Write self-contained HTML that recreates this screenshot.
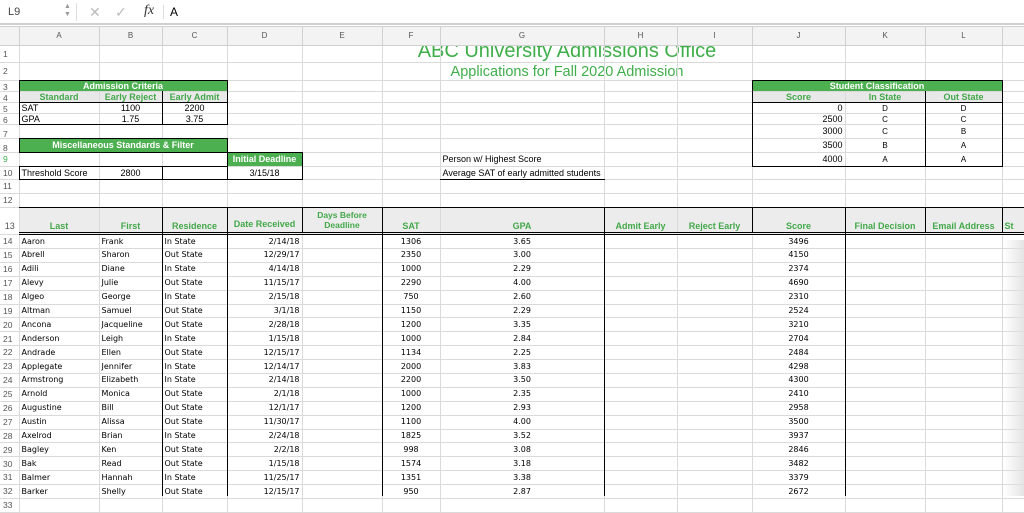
<!DOCTYPE html>
<html><head><meta charset="utf-8"><style>
*{margin:0;padding:0;box-sizing:border-box}
body{width:1024px;height:496px;overflow:hidden;background:#fff;position:relative;font-family:"Liberation Sans",Arial,sans-serif;color:#000}
#tb{position:absolute;left:0;top:0;width:1024px;height:25px;background:#fff;border-bottom:2px solid #cfcfcf}
table{position:absolute;left:0;top:26px;border-collapse:collapse;table-layout:fixed;width:1032px}
td{border:1px solid #dadada;font-size:9px;line-height:1;padding:0 2px;white-space:nowrap;overflow:hidden;vertical-align:bottom}
tr.h td{background:#f3f3f3;color:#555;text-align:center;vertical-align:middle;font-size:8px;border-color:#d0d0d0}
td.n{color:#555;font-size:8.5px;text-align:left;padding-left:3px;border-left:none;background:#fff}
tr.h td.n{background:#f3f3f3}
.g{background:#4caf50;color:#fff;font-weight:bold;text-align:center;font-size:9px}
.s{background:#e8e8e8;color:#43a84a;font-weight:bold;text-align:center;font-size:9px}
.hd td{background:#ececec;color:#43a84a;font-weight:bold;font-size:9px;text-align:center;padding-bottom:3px}
.hd td.n{background:#fff;color:#555;font-weight:normal}
.d td{font-family:"DejaVu Sans",sans-serif;font-size:8px;vertical-align:middle}
.d td.n{font-family:"Liberation Sans",sans-serif;font-size:8.5px}
.r{text-align:right}.c{text-align:center}
.b{position:absolute;border:1px solid #000;pointer-events:none}
.v{position:absolute;width:1px;background:#000}
.hl{position:absolute;height:1px;background:#000}
</style></head><body>
<div id="tb">
<div style="position:absolute;left:8px;top:6px;font-size:11px;color:#444">L9</div>
<div style="position:absolute;left:64px;top:3px;font-size:7px;color:#999;line-height:8px">▲<br>▼</div>
<div style="position:absolute;left:76px;top:3px;width:1px;height:18px;background:#ddd"></div>
<div style="position:absolute;left:89px;top:4px;font-size:14px;color:#bbb">✕</div>
<div style="position:absolute;left:115px;top:4px;font-size:14px;color:#bbb">✓</div>
<div style="position:absolute;left:144px;top:3px;font-size:14px;font-style:italic;font-family:'Liberation Serif',serif;color:#333">fx</div>
<div style="position:absolute;left:163px;top:5px;width:1px;height:14px;background:#ddd"></div>
<div style="position:absolute;left:170px;top:5px;font-size:12px">A</div>
</div>
<div style="position:absolute;left:340px;top:46px;width:454px;height:15px;overflow:hidden"><div style="position:absolute;left:0;top:-7px;width:454px;text-align:center;font-size:20px;line-height:24px;color:#3fae4a">ABC University Admissions Office</div></div>
<div style="position:absolute;left:340px;top:64px;width:454px;text-align:center;font-size:14.5px;line-height:17px;color:#3fae4a">Applications for Fall 2020 Admission</div>
<table>
<colgroup><col style="width:19px"><col style="width:80px"><col style="width:63px"><col style="width:65px"><col style="width:75px"><col style="width:80px"><col style="width:58px"><col style="width:164px"><col style="width:73px"><col style="width:75px"><col style="width:93px"><col style="width:80px"><col style="width:77px"><col style="width:30px"></colgroup>
<tr class="h" style="height:19px"><td class="n"></td><td>A</td><td>B</td><td>C</td><td>D</td><td>E</td><td>F</td><td>G</td><td>H</td><td>I</td><td>J</td><td>K</td><td>L</td><td></td></tr>
<tr style="height:17px"><td class="n" style="vertical-align:middle">1</td><td></td><td></td><td></td><td></td><td></td><td></td><td></td><td></td><td></td><td></td><td></td><td></td><td></td></tr>
<tr style="height:18px"><td class="n" style="vertical-align:middle">2</td><td></td><td></td><td></td><td></td><td></td><td></td><td></td><td></td><td></td><td></td><td></td><td></td><td></td></tr>
<tr style="height:11px"><td class="n">3</td><td colspan="3" class="g">Admission Criteria</td><td></td><td></td><td></td><td></td><td></td><td></td><td colspan="3" class="g">Student Classification</td><td></td></tr>
<tr style="height:11px"><td class="n">4</td><td class="s">Standard</td><td class="s">Early Reject</td><td class="s">Early Admit</td><td></td><td></td><td></td><td></td><td></td><td></td><td class="s">Score</td><td class="s">In State</td><td class="s">Out State</td><td></td></tr>
<tr style="height:11px"><td class="n">5</td><td>SAT</td><td class="c">1100</td><td class="c">2200</td><td></td><td></td><td></td><td></td><td></td><td></td><td class="r">0</td><td class="c" style="font-size:8px">D</td><td class="c" style="font-size:8px">D</td><td></td></tr>
<tr style="height:11px"><td class="n">6</td><td>GPA</td><td class="c">1.75</td><td class="c">3.75</td><td></td><td></td><td></td><td></td><td></td><td></td><td class="r">2500</td><td class="c" style="font-size:8px">C</td><td class="c" style="font-size:8px">C</td><td></td></tr>
<tr style="height:14px"><td class="n">7</td><td></td><td></td><td></td><td></td><td></td><td></td><td></td><td></td><td></td><td class="r" style="vertical-align:middle">3000</td><td class="c" style="font-size:8px;vertical-align:middle">C</td><td class="c" style="font-size:8px;vertical-align:middle">B</td><td></td></tr>
<tr style="height:14px"><td class="n">8</td><td colspan="3" class="g" style="vertical-align:middle">Miscellaneous Standards &amp; Filter</td><td></td><td></td><td></td><td></td><td></td><td></td><td class="r" style="vertical-align:middle">3500</td><td class="c" style="font-size:8px;vertical-align:middle">B</td><td class="c" style="font-size:8px;vertical-align:middle">A</td><td></td></tr>
<tr style="height:14px"><td class="n" style="color:#3fae4a;vertical-align:middle">9</td><td></td><td></td><td></td><td class="g" style="vertical-align:middle">Initial Deadline</td><td></td><td></td><td style="vertical-align:middle">Person w/ Highest Score</td><td></td><td></td><td class="r" style="vertical-align:middle">4000</td><td class="c" style="font-size:8px;vertical-align:middle">A</td><td class="c" style="font-size:8px;vertical-align:middle">A</td><td></td></tr>
<tr style="height:13px"><td class="n" style="vertical-align:middle">10</td><td style="vertical-align:middle">Threshold Score</td><td class="c" style="vertical-align:middle">2800</td><td></td><td class="c" style="vertical-align:middle">3/15/18</td><td></td><td></td><td style="vertical-align:middle">Average SAT of early admitted students</td><td></td><td></td><td></td><td></td><td></td><td></td></tr>
<tr style="height:14px"><td class="n" style="vertical-align:middle">11</td><td></td><td></td><td></td><td></td><td></td><td></td><td></td><td></td><td></td><td></td><td></td><td></td><td></td></tr>
<tr style="height:14px"><td class="n" style="vertical-align:middle">12</td><td></td><td></td><td></td><td></td><td></td><td></td><td></td><td></td><td></td><td></td><td></td><td></td><td></td></tr>
<tr class="hd" style="height:27px"><td class="n" style="padding-bottom:3px">13</td><td>Last</td><td>First</td><td>Residence</td><td style="padding-bottom:5px">Date Received</td><td style="vertical-align:top;padding-top:2px;line-height:1.2;font-size:8.5px">Days Before<br>Deadline</td><td>SAT</td><td>GPA</td><td>Admit Early</td><td>Reject Early</td><td>Score</td><td>Final Decision</td><td>Email Address</td><td style="text-align:left">St</td></tr>
<tr class="d" style="height:14px"><td class="n">14</td><td>Aaron</td><td>Frank</td><td>In State</td><td class="r">2/14/18</td><td></td><td class="c">1306</td><td class="c">3.65</td><td></td><td></td><td class="c">3496</td><td></td><td></td><td></td></tr>
<tr class="d" style="height:13.9px"><td class="n">15</td><td>Abrell</td><td>Sharon</td><td>Out State</td><td class="r">12/29/17</td><td></td><td class="c">2350</td><td class="c">3.00</td><td></td><td></td><td class="c">4150</td><td></td><td></td><td></td></tr>
<tr class="d" style="height:13.9px"><td class="n">16</td><td>Adili</td><td>Diane</td><td>In State</td><td class="r">4/14/18</td><td></td><td class="c">1000</td><td class="c">2.29</td><td></td><td></td><td class="c">2374</td><td></td><td></td><td></td></tr>
<tr class="d" style="height:13.9px"><td class="n">17</td><td>Alevy</td><td>Julie</td><td>Out State</td><td class="r">11/15/17</td><td></td><td class="c">2290</td><td class="c">4.00</td><td></td><td></td><td class="c">4690</td><td></td><td></td><td></td></tr>
<tr class="d" style="height:13.9px"><td class="n">18</td><td>Algeo</td><td>George</td><td>In State</td><td class="r">2/15/18</td><td></td><td class="c">750</td><td class="c">2.60</td><td></td><td></td><td class="c">2310</td><td></td><td></td><td></td></tr>
<tr class="d" style="height:13.9px"><td class="n">19</td><td>Altman</td><td>Samuel</td><td>Out State</td><td class="r">3/1/18</td><td></td><td class="c">1150</td><td class="c">2.29</td><td></td><td></td><td class="c">2524</td><td></td><td></td><td></td></tr>
<tr class="d" style="height:13.9px"><td class="n">20</td><td>Ancona</td><td>Jacqueline</td><td>Out State</td><td class="r">2/28/18</td><td></td><td class="c">1200</td><td class="c">3.35</td><td></td><td></td><td class="c">3210</td><td></td><td></td><td></td></tr>
<tr class="d" style="height:13.9px"><td class="n">21</td><td>Anderson</td><td>Leigh</td><td>In State</td><td class="r">1/15/18</td><td></td><td class="c">1000</td><td class="c">2.84</td><td></td><td></td><td class="c">2704</td><td></td><td></td><td></td></tr>
<tr class="d" style="height:13.9px"><td class="n">22</td><td>Andrade</td><td>Ellen</td><td>Out State</td><td class="r">12/15/17</td><td></td><td class="c">1134</td><td class="c">2.25</td><td></td><td></td><td class="c">2484</td><td></td><td></td><td></td></tr>
<tr class="d" style="height:13.9px"><td class="n">23</td><td>Applegate</td><td>Jennifer</td><td>In State</td><td class="r">12/14/17</td><td></td><td class="c">2000</td><td class="c">3.83</td><td></td><td></td><td class="c">4298</td><td></td><td></td><td></td></tr>
<tr class="d" style="height:13.9px"><td class="n">24</td><td>Armstrong</td><td>Elizabeth</td><td>In State</td><td class="r">2/14/18</td><td></td><td class="c">2200</td><td class="c">3.50</td><td></td><td></td><td class="c">4300</td><td></td><td></td><td></td></tr>
<tr class="d" style="height:13.9px"><td class="n">25</td><td>Arnold</td><td>Monica</td><td>Out State</td><td class="r">2/1/18</td><td></td><td class="c">1000</td><td class="c">2.35</td><td></td><td></td><td class="c">2410</td><td></td><td></td><td></td></tr>
<tr class="d" style="height:13.9px"><td class="n">26</td><td>Augustine</td><td>Bill</td><td>Out State</td><td class="r">12/1/17</td><td></td><td class="c">1200</td><td class="c">2.93</td><td></td><td></td><td class="c">2958</td><td></td><td></td><td></td></tr>
<tr class="d" style="height:13.9px"><td class="n">27</td><td>Austin</td><td>Alissa</td><td>Out State</td><td class="r">11/30/17</td><td></td><td class="c">1100</td><td class="c">4.00</td><td></td><td></td><td class="c">3500</td><td></td><td></td><td></td></tr>
<tr class="d" style="height:13.9px"><td class="n">28</td><td>Axelrod</td><td>Brian</td><td>In State</td><td class="r">2/24/18</td><td></td><td class="c">1825</td><td class="c">3.52</td><td></td><td></td><td class="c">3937</td><td></td><td></td><td></td></tr>
<tr class="d" style="height:13.9px"><td class="n">29</td><td>Bagley</td><td>Ken</td><td>Out State</td><td class="r">2/2/18</td><td></td><td class="c">998</td><td class="c">3.08</td><td></td><td></td><td class="c">2846</td><td></td><td></td><td></td></tr>
<tr class="d" style="height:13.9px"><td class="n">30</td><td>Bak</td><td>Read</td><td>Out State</td><td class="r">1/15/18</td><td></td><td class="c">1574</td><td class="c">3.18</td><td></td><td></td><td class="c">3482</td><td></td><td></td><td></td></tr>
<tr class="d" style="height:13.9px"><td class="n">31</td><td>Balmer</td><td>Hannah</td><td>In State</td><td class="r">11/25/17</td><td></td><td class="c">1351</td><td class="c">3.38</td><td></td><td></td><td class="c">3379</td><td></td><td></td><td></td></tr>
<tr class="d" style="height:13.9px"><td class="n">32</td><td>Barker</td><td>Shelly</td><td>Out State</td><td class="r">12/15/17</td><td></td><td class="c">950</td><td class="c">2.87</td><td></td><td></td><td class="c">2672</td><td></td><td></td><td></td></tr>
<tr class="d" style="height:13.9px"><td class="n">33</td><td></td><td></td><td></td><td></td><td></td><td></td><td></td><td></td><td></td><td></td><td></td><td></td><td></td></tr>
</table>
<div class="b" style="left:19px;top:80px;width:209px;height:45px"></div>
<div class="hl" style="left:19px;top:102px;width:209px"></div>
<div class="v" style="left:162px;top:91px;height:33px"></div>
<div class="b" style="left:19px;top:138px;width:209px;height:15px"></div>
<div class="b" style="left:19px;top:166px;width:209px;height:14px"></div>
<div class="v" style="left:162px;top:166px;height:13px"></div>
<div class="b" style="left:227px;top:152px;width:76px;height:28px"></div>
<div class="hl" style="left:440px;top:179px;width:165px"></div>
<div class="b" style="left:752px;top:80px;width:251px;height:87px"></div>
<div class="hl" style="left:752px;top:102px;width:251px"></div>
<div class="v" style="left:925px;top:91px;height:75px"></div>
<div class="hl" style="left:19px;top:207px;width:1005px"></div>
<div class="hl" style="left:19px;top:232px;width:1005px"></div>
<div class="hl" style="left:19px;top:234px;width:1005px"></div>
<div class="v" style="left:162px;top:207px;height:289px"></div>
<div class="v" style="left:227px;top:207px;height:289px"></div>
<div class="v" style="left:302px;top:207px;height:26px"></div>
<div class="v" style="left:382px;top:207px;height:289px"></div>
<div class="v" style="left:604px;top:207px;height:289px"></div>
<div class="v" style="left:752px;top:207px;height:26px"></div>
<div class="v" style="left:845px;top:207px;height:289px"></div>
<div class="v" style="left:925px;top:207px;height:26px"></div>
<div class="v" style="left:1002px;top:207px;height:26px"></div>
<div style="position:absolute;left:1004px;top:240px;width:20px;height:256px;background:linear-gradient(to right,rgba(255,255,255,0),rgba(225,225,225,.9))"></div>
</body></html>
